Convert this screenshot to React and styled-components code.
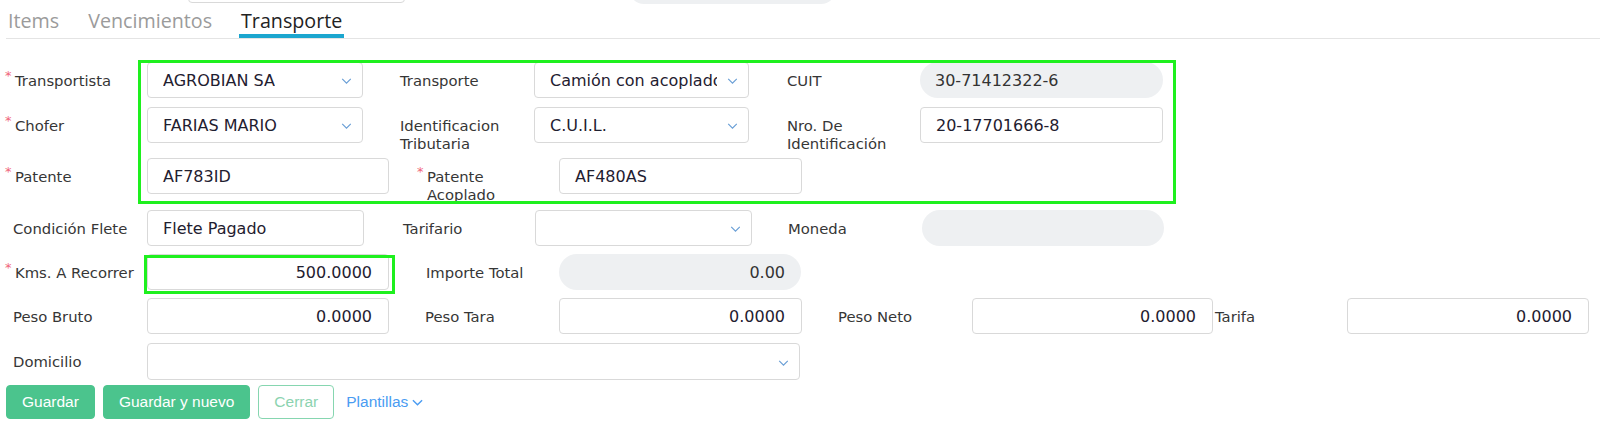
import React from 'react';
import styled, { createGlobalStyle } from 'styled-components';

const GlobalStyle = createGlobalStyle`
  html, body {
    margin: 0;
    padding: 0;
    background: #fff;
  }
  * {
    box-sizing: border-box;
  }
`;

const Page = styled.div`
  position: relative;
  width: 1600px;
  height: 424px;
  overflow: hidden;
  background: #fff;
  font-family: 'DejaVu Sans', Verdana, sans-serif;
`;

const TopStrip = styled.div`
  display: flex;
  align-items: flex-end;
  height: 4px;
  overflow: hidden;
`;

const StubInput = styled.div`
  flex-shrink: 0;
  margin-left: 188px;
  width: 217px;
  height: 30px;
  margin-bottom: 1px;
  border: 1px solid #d9d9d9;
  border-radius: 4px;
`;

const StubPill = styled.div`
  flex-shrink: 0;
  margin-left: 224px;
  width: 207px;
  height: 30px;
  background: #eef0f2;
  border-radius: 16px;
`;

const TabBar = styled.div`
  display: flex;
  gap: 25px;
  height: 35px;
  margin-left: 6px;
  border-bottom: 1px solid #e4e4e4;
`;

const Tab = styled.div`
  height: 34px;
  padding: 4px 2px 0;
  line-height: 26px;
  font-family: 'Open Sans', sans-serif;
  font-size: 19.7px;
  color: ${({ $active }) => ($active ? '#222' : '#9b9b9b')};
  border-bottom: 4px solid ${({ $active }) => ($active ? '#1ba6cf' : 'transparent')};
`;

const Form = styled.div`
  display: flex;
  flex-direction: column;
`;

const Row = styled.div`
  display: flex;
  height: ${({ $h }) => $h || 36}px;
  margin-top: ${({ $top }) => $top}px;
`;

const Label = styled.div`
  position: relative;
  flex-shrink: 0;
  width: ${({ $w }) => $w}px;
  height: 36px;
  padding-left: ${({ $pad }) => $pad}px;
  padding-top: 10px;
  padding-right: ${({ $pr }) => $pr || 4}px;
  font-size: 14.8px;
  line-height: 18px;
  color: #363636;
  overflow: visible;
`;

const Star = styled.span`
  position: absolute;
  left: ${({ $at }) => $at}px;
  top: 7px;
  color: #f0667a;
  font-size: 13px;
  line-height: 13px;
`;

const Field = styled.div`
  flex-shrink: 0;
  position: relative;
  display: flex;
  align-items: center;
  justify-content: ${({ $right }) => ($right ? 'flex-end' : 'flex-start')};
  width: ${({ $w }) => $w}px;
  height: 100%;
  padding: 0 ${({ $select }) => ($select ? 31 : 16)}px 0 15px;
  border: 1px solid #d9d9d9;
  border-radius: 4px;
  background: #fff;
  font-size: 16px;
  color: #1f2030;
  white-space: nowrap;
  overflow: hidden;
`;

const Pill = styled(Field)`
  border: none;
  border-radius: 18px;
  background: #eef0f2;
  color: #333;
`;

const Value = styled.span`
  display: block;
  min-width: 0;
  overflow: hidden;
  white-space: nowrap;
`;

const Chevron = styled.svg`
  position: absolute;
  right: 10px;
  top: 50%;
  margin-top: -2px;
  width: 11px;
  height: 6px;
`;

const Frame = styled.div`
  position: absolute;
  left: ${({ $x }) => $x}px;
  top: ${({ $y }) => $y}px;
  width: ${({ $w }) => $w}px;
  height: ${({ $h }) => $h}px;
  border: 3px solid #1ef01e;
  pointer-events: none;
`;

const Actions = styled.div`
  display: flex;
  align-items: center;
  gap: 8px;
  margin-top: 5px;
  margin-left: 6px;
  font-family: 'Liberation Sans', Arial, sans-serif;
`;

const Button = styled.button`
  height: 34px;
  padding: 0 15px;
  border-radius: 4px;
  font-family: inherit;
  font-size: 15.5px;
  border: 1px solid ${({ $outline }) => ($outline ? '#86d6b0' : '#4bc48d')};
  background: ${({ $outline }) => ($outline ? '#fff' : '#4bc48d')};
  color: ${({ $outline }) => ($outline ? '#8cd3b0' : '#fff')};
`;

const LinkMenu = styled.div`
  display: flex;
  align-items: center;
  gap: 4px;
  margin-left: 4px;
  font-size: 15.5px;
  color: #4a9cf2;
`;

const ChevronIcon = ({ color = '#6a9fd6' }) => (
  <Chevron viewBox="0 0 12 7">
    <polyline points="1,1 6,6 11,1" fill="none" stroke={color} strokeWidth="1.4" />
  </Chevron>
);

const Lbl = ({ w, pad, pr, req, children }) => (
  <Label $w={w} $pad={pad} $pr={pr}>
    {req && <Star $at={pad - 10}>*</Star>}
    {children}
  </Label>
);

const Select = ({ w, value }) => (
  <Field $w={w} $select>
    <Value>{value}</Value>
    <ChevronIcon />
  </Field>
);

export default function App() {
  return (
    <Page>
      <GlobalStyle />
      <TopStrip>
        <StubInput />
        <StubPill />
      </TopStrip>
      <TabBar>
        <Tab>Items</Tab>
        <Tab>Vencimientos</Tab>
        <Tab $active>Transporte</Tab>
      </TabBar>

      <Form>
        <Row $top={23}>
          <Lbl w={147} pad={15} req>Transportista</Lbl>
          <Select w={216} value="AGROBIAN SA" />
          <Lbl w={171} pad={37}>Transporte</Lbl>
          <Select w={215} value="Camión con acoplado" />
          <Lbl w={171} pad={38}>CUIT</Lbl>
          <Pill $w={243}>30-71412322-6</Pill>
        </Row>
        <Row $top={9}>
          <Lbl w={147} pad={15} req>Chofer</Lbl>
          <Select w={216} value="FARIAS MARIO" />
          <Lbl w={171} pad={37}>Identificacion Tributaria</Lbl>
          <Select w={215} value="C.U.I.L." />
          <Lbl w={171} pad={38}>Nro. De Identificación</Lbl>
          <Field $w={243}>20-17701666-8</Field>
        </Row>
        <Row $top={15}>
          <Lbl w={147} pad={15} req>Patente</Lbl>
          <Field $w={242}>AF783ID</Field>
          <Lbl w={170} pad={38} pr={40} req>Patente Acoplado</Lbl>
          <Field $w={243}>AF480AS</Field>
        </Row>
        <Row $top={16}>
          <Lbl w={147} pad={13}>Condición Flete</Lbl>
          <Field $w={217}>Flete Pagado</Field>
          <Lbl w={171} pad={39}>Tarifario</Lbl>
          <Select w={217} value="" />
          <Lbl w={170} pad={36}>Moneda</Lbl>
          <Pill $w={242} />
        </Row>
        <Row $top={8}>
          <Lbl w={147} pad={15} req>Kms. A Recorrer</Lbl>
          <Field $w={242} $right>500.0000</Field>
          <Lbl w={170} pad={37}>Importe Total</Lbl>
          <Pill $w={242} $right>0.00</Pill>
        </Row>
        <Row $top={8}>
          <Lbl w={147} pad={13}>Peso Bruto</Lbl>
          <Field $w={242} $right>0.0000</Field>
          <Lbl w={170} pad={36}>Peso Tara</Lbl>
          <Field $w={243} $right>0.0000</Field>
          <Lbl w={170} pad={36}>Peso Neto</Lbl>
          <Field $w={241} $right>0.0000</Field>
          <Lbl w={134} pad={2}>Tarifa</Lbl>
          <Field $w={242} $right>0.0000</Field>
        </Row>
        <Row $top={9} $h={37}>
          <Lbl w={147} pad={13}>Domicilio</Lbl>
          <Select w={653} value="" />
        </Row>
      </Form>

      <Actions>
        <Button>Guardar</Button>
        <Button>Guardar y nuevo</Button>
        <Button $outline>Cerrar</Button>
        <LinkMenu>
          Plantillas
          <svg width="11" height="7" viewBox="0 0 12 7">
            <polyline points="1,1 6,6 11,1" fill="none" stroke="#4a9cf2" strokeWidth="1.5" />
          </svg>
        </LinkMenu>
      </Actions>

      <Frame $x={138} $y={60} $w={1038} $h={144} />
      <Frame $x={144} $y={255} $w={251} $h={39} />
    </Page>
  );
}
